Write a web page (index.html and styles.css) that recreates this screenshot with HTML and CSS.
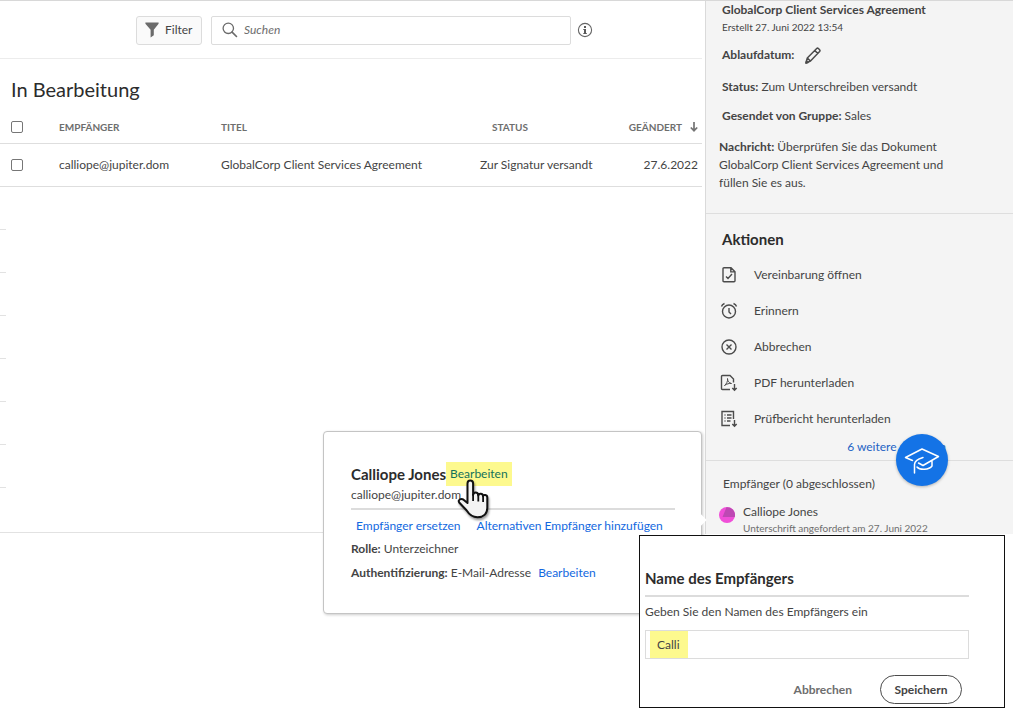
FILE: index.html
```html
<!DOCTYPE html>
<html lang="de">
<head>
<meta charset="utf-8">
<title>In Bearbeitung</title>
<link rel="stylesheet" href="styles.css">
</head>
<body>
<div class="page">
  <main class="main">
    <div class="toolbar">
      <button class="filter" type="button">
        <svg width="14" height="16" viewBox="0 0 14 16"><path d="M.4.5h13.2v1.2L8.800 7.800v5.400L5.600 15.600V7.800L.4 1.700z" fill="#6b6b6b"/></svg>
        Filter
      </button>
      <label class="search">
        <svg width="16" height="16" viewBox="0 0 16 16" fill="none" stroke="#6a6a6a"><circle cx="6.300" cy="6.300" r="5.200" stroke-width="1.300"/><path d="M10.100 10.100l4.400 4.400" stroke-width="1.600" stroke-linecap="round"/></svg>
        <input type="search" placeholder="Suchen" aria-label="Suchen">
      </label>
      <button class="info" type="button" aria-label="Info">
        <svg width="16" height="16" viewBox="0 0 16 16"><circle cx="8" cy="8" r="6.600" fill="none" stroke="#666" stroke-width="1.100"/><path d="M7 4h2v2H7zM6.300 6.900H9v4h.8v1H6.300v-1H7V7.900h-.7z" fill="#5a5a5a"/></svg>
      </button>
    </div>
    <h1 class="heading">In Bearbeitung</h1>
    <table class="list">
      <thead>
        <tr>
          <th class="col-check"><input type="checkbox" aria-label="Alle auswählen"></th>
          <th class="col-recipient">Empfänger</th>
          <th class="col-title">Titel</th>
          <th class="col-status">Status</th>
          <th class="col-date"><span class="sort">Geändert
            <svg width="8" height="10" viewBox="0 0 8 10" fill="none" stroke="#747474" stroke-width="1.700"><path d="M4 0v8.500M.8 5.500L4 8.700l3.200-3.200"/></svg></span></th>
        </tr>
      </thead>
      <tbody>
        <tr>
          <td><input type="checkbox" aria-label="Vereinbarung auswählen"></td>
          <td>calliope@jupiter.dom</td>
          <td>GlobalCorp Client Services Agreement</td>
          <td>Zur Signatur versandt</td>
          <td class="date">27.6.2022</td>
        </tr>
      </tbody>
    </table>
    <div class="empty-rows"><i></i><i></i><i></i><i></i><i></i><i></i><i></i><i class="last"></i></div>
  </main>

  <aside class="details">
    <section class="summary">
      <h2 class="doc-title">GlobalCorp Client Services Agreement</h2>
      <p class="created">Erstellt 27. Juni 2022 13:54</p>
      <p class="expiry"><b>Ablaufdatum:</b>
        <button type="button" class="pencil" aria-label="Ablaufdatum bearbeiten"><svg width="16" height="17" viewBox="0 0 16 17" fill="none" stroke="#4b4b4b" stroke-width="1.500" stroke-linejoin="round"><path d="M1 16l1.300-5L11.700 1.500q.8-.8 1.700 0l1.200 1.200q.8.8 0 1.700L5.500 14zM9.800 3.500l2.900 2.900M2.300 11l3.200 3"/><path d="M1 16l.5-2 1.500 1.500z" fill="#4b4b4b"/></svg></button></p>
      <p class="status"><b>Status:</b> Zum Unterschreiben versandt</p>
      <p class="group"><b>Gesendet von Gruppe:</b> Sales</p>
      <p class="message"><b>Nachricht:</b> Überprüfen Sie das Dokument GlobalCorp Client Services Agreement und füllen Sie es aus.</p>
    </section>
    <section class="actions">
      <h2 class="section-title">Aktionen</h2>
      <ul class="action-list">
        <li><button type="button"><svg width="18" height="18" viewBox="0 0 18 18"><path d="M4 1.700h7l4 4v9q0 1-1 1H4q-1 0-1-1v-12q0-1 1-1zM10.800 1.700v4.200H15M6 10.500l2 2 4-4.500"/></svg>Vereinbarung öffnen</button></li>
        <li><button type="button"><svg width="18" height="18" viewBox="0 0 18 18"><circle cx="9" cy="9.500" r="6.500"/><path d="M9 6v4l2 2M1.500 4.500Q2 2.500 4.500 1.500M16.500 4.500Q16 2.500 13.500 1.500"/></svg>Erinnern</button></li>
        <li><button type="button"><svg width="18" height="18" viewBox="0 0 18 18"><circle cx="9" cy="9" r="7"/><path d="M6.500 6.500l5 5M11.500 6.500l-5 5"/></svg>Abbrechen</button></li>
        <li><button type="button"><svg width="18" height="18" viewBox="0 0 18 18"><path d="M10 15.500H2.500q-1 0-1-1v-12q0-1 1-1H10l3.500 3.500v3.500M14.500 10v6M12.300 14l2.200 2.300 2.200-2.300"/><path d="M4.500 11.500c2-1.500 3.500-4.500 3-7 0 2.500 1.500 4.500 4 5-2.500-.3-4.500.3-7 2z" stroke-width="1"/></svg>PDF herunterladen</button></li>
        <li><button type="button"><svg width="18" height="18" viewBox="0 0 18 18"><path d="M10 15.500H2v-14h11.500V9M14.500 10v6M12.300 14l2.200 2.300 2.200-2.300M4.500 5h1M7 5h4.500M4.500 8h1M7 8h4.500M4.500 11h1M7 11h3.500"/></svg>Prüfbericht herunterladen</button></li>
      </ul>
      <a class="more" href="#">6 weitere anzeigen</a>
      <button class="learn" type="button" aria-label="Lernen">
        <svg width="36" height="30" viewBox="0 0 36 30" fill="none" stroke="#fff" stroke-width="1.500" stroke-linejoin="round" stroke-linecap="round"><path d="M8.500 15.500L1.500 12.500 18 4l16.500 7.500L19 20.500l-4.500-2.500M19 12.500q-8.500 2.500-8.500 7V28M13 22c3 3.500 12 3 15-1v-4.500"/></svg>
      </button>
    </section>
    <section class="recipients">
      <h3 class="rec-title">Empfänger (0 abgeschlossen)</h3>
      <div class="person">
        <svg width="16" height="16" viewBox="0 0 16 16"><circle cx="8" cy="8" r="8" fill="#f04fd8"/><path d="M3.500 10L7.500.2A8 8 0 0 1 15.800 10z" fill="#bd49b3"/></svg>
        <div><p class="name">Calliope Jones</p><p class="requested">Unterschrift angefordert am 27. Juni 2022</p></div>
      </div>
    </section>
  </aside>

  <section class="popover">
    <div class="who"><h2>Calliope Jones</h2><a class="marked" href="#">Bearbeiten</a></div>
    <p class="mail">calliope@jupiter.dom</p>
    <div class="links"><a href="#">Empfänger ersetzen</a><a href="#">Alternativen Empfänger hinzufügen</a></div>
    <p class="fact"><b>Rolle:</b> Unterzeichner</p>
    <p class="fact"><b>Authentifizierung:</b> E-Mail-Adresse <a href="#">Bearbeiten</a></p>
    <svg class="hand" width="36" height="44" viewBox="0 0 36 44"><path d="M11.500 25V5.500q0-3 2.800-3t2.800 3V17q.2-2.500 2.600-2.500T22.300 17.500q.3-2 2.500-1.800t2.300 2.600q.2-1.600 2.200-1.300t2 2.500v10c0 6.500-4 9.800-9.800 9.800-6 0-8.500-3-11-7L3.200 24.500q-1.200-1.900.6-3t3.700.2z" fill="#f4f4f4" stroke="#111" stroke-width="2" stroke-linejoin="round"/><path d="M17.100 16v7M22.300 17v6.500M27.100 18v6" stroke="#111" stroke-width="1.800"/></svg>
  </section>

  <form class="dialog">
    <h2>Name des Empfängers</h2>
    <label for="rname">Geben Sie den Namen des Empfängers ein</label>
    <input id="rname" type="text" value="Calli">
    <div class="buttons"><button type="button" class="cancel">Abbrechen</button><button type="button" class="save">Speichern</button></div>
  </form>
</div>
</body>
</html>
```
FILE: styles.css
```css
* { box-sizing: border-box; margin: 0; padding: 0; }
body { font: 12px/18px Lato, "Noto Sans", sans-serif; color: #444; background: #fff; }
button, input { font: inherit; color: inherit; }
button { background: none; border: 0; }
a { color: #1268e0; text-decoration: none; }
svg { display: block; flex: none; }
ul { list-style: none; }

.page { position: relative; display: flex; align-items: flex-start; min-height: 100vh; border-top: 1px solid #d8d8d8; }
.main { flex: 1; min-width: 0; padding-right: 3px; }

.toolbar { display: flex; align-items: center; height: 58px; padding: 1px 109px 0 136px; border-bottom: 1px solid #ececec; }
.filter { display: flex; align-items: center; gap: 6px; width: 66px; height: 29px; padding-left: 8px; border: 1px solid #dcdcdc; border-radius: 3px; background: #fafafa; }
.search { display: flex; align-items: center; flex: 1; gap: 6px; height: 29px; margin: 0 6px 0 9px; padding-left: 10px; border: 1px solid #dcdcdc; border-radius: 2px; }
.search input { flex: 1; min-width: 0; border: 0; outline: 0; background: none; }
.search input::placeholder { font-style: italic; color: #6e6e6e; opacity: 1; }

.heading { padding: 17px 0 0 11px; font-size: 20px; line-height: 26px; font-weight: 400; color: #2c2c2c; }
.list { width: 100%; table-layout: fixed; border-collapse: collapse; margin-top: 8px; }
.list th { height: 33px; padding-top: 2px; text-align: left; font-size: 10px; font-weight: 700; text-transform: uppercase; color: #6e6e6e; border-bottom: 1px solid #dedede; }
.list td { height: 43px; border-bottom: 1px solid #dedede; white-space: nowrap; }
.list input { appearance: none; display: block; width: 12px; height: 12px; margin-left: 11px; border: 1px solid #767676; border-radius: 2px; background: #fff; }
.list .col-check { width: 59px; }
.list .col-recipient { width: 162px; }
.list .col-title { width: auto; }
.list .col-status { width: 131px; padding-left: 12px; }
.list .col-date { width: 91px; }
.sort { display: flex; justify-content: flex-end; align-items: center; gap: 8px; padding-right: 4px; }
.list .date { text-align: right; padding-right: 4px; }
.empty-rows i { display: block; width: 6px; height: 43px; border-bottom: 1px solid #e2e2e2; }
.empty-rows .last { width: auto; height: 45px; }

.details { width: 308px; height: 533px; background: #f4f4f4; border-left: 1px solid #dadada; }
.summary { padding: 0 60px 21px 16px; border-bottom: 1px solid #dedede; }
.doc-title { font-size: 12px; line-height: 18px; white-space: nowrap; }
.created { font-size: 10px; line-height: 17px; }
.expiry { display: flex; align-items: center; gap: 11px; margin-top: 10px; }
.status { margin-top: 14px; white-space: nowrap; }
.group { margin-top: 11px; }
.message { margin: 13px 0 0 -3px; }
.actions { position: relative; height: 247px; padding: 15px 16px 0 16px; border-bottom: 1px solid #dedede; }
.section-title { font-size: 15px; line-height: 20px; color: #2c2c2c; }
.action-list { display: grid; gap: 18px; margin: 17px 0 0 -2px; }
.action-list button { display: flex; align-items: center; gap: 16px; }
.action-list svg { fill: none; stroke: #4b4b4b; stroke-width: 1.400; }
.more { display: block; margin: 10px 51px 0 0; text-align: right; color: #2463c4; }
.learn { position: absolute; top: 220px; right: 65px; display: grid; place-items: center; width: 52px; height: 52px; border-radius: 50%; background: #1473e6; box-shadow: 0 1px 3px #0004; }
.recipients { padding: 14px 0 0 17px; }
.rec-title { font-size: 12px; font-weight: 400; }
.person { display: flex; align-items: flex-start; gap: 8px; margin: 11px 0 0 -4px; }
.person svg { margin-top: 3px; }
.name { line-height: 16px; }
.requested { font-size: 10px; line-height: 16px; color: #6e6e6e; }

.popover { position: absolute; top: 430px; right: 311px; width: 379px; padding: 30px 26px 25px 27px; border: 1px solid #c4c4c4; border-radius: 4px; background: #fff; box-shadow: 1px 1px 3px #0003; }
.popover::after { content: ""; position: absolute; right: -4px; top: 84px; width: 8px; height: 8px; background: #fff; transform: rotate(45deg); }
.who { display: flex; align-items: center; }
.who h2 { font-size: 15px; line-height: 22px; color: #2c2c2c; }
.marked { padding: 3px 4px; background: #fdf98e; color: #14715a; }
.mail { padding-bottom: 4px; border-bottom: 2px solid #dcdcdc; }
.links { display: flex; gap: 16px; margin: 7px 0 5px 5px; white-space: nowrap; }
.fact { margin-bottom: 6px; }
.fact a { margin-left: 4px; }
.hand { position: absolute; left: 132px; top: 46px; filter: drop-shadow(1px 2px 1px #0006); }

.dialog { position: absolute; top: 534px; right: 8px; width: 366px; padding: 31px 35px 3px 5px; border: 1px solid #111; background: #fff; }
.dialog h2 { padding-bottom: 6px; border-bottom: 2px solid #dcdcdc; font-size: 15px; line-height: 22px; color: #2c2c2c; }
.dialog label { display: block; margin-top: 6px; }
.dialog input { display: block; width: 100%; height: 29px; margin-top: 9px; padding-left: 11px; border: 1px solid #dcdcdc; background: linear-gradient(#fdf98e, #fdf98e) 4px 0 / 38px 100% no-repeat; outline: 0; }
.buttons { display: flex; justify-content: flex-end; gap: 28px; margin: 16px 7px 0 0; font-weight: 700; }
.cancel { color: #6e6e6e; }
.save { width: 82px; height: 29px; border: 1px solid #4b4b4b; border-radius: 15px; }
```
